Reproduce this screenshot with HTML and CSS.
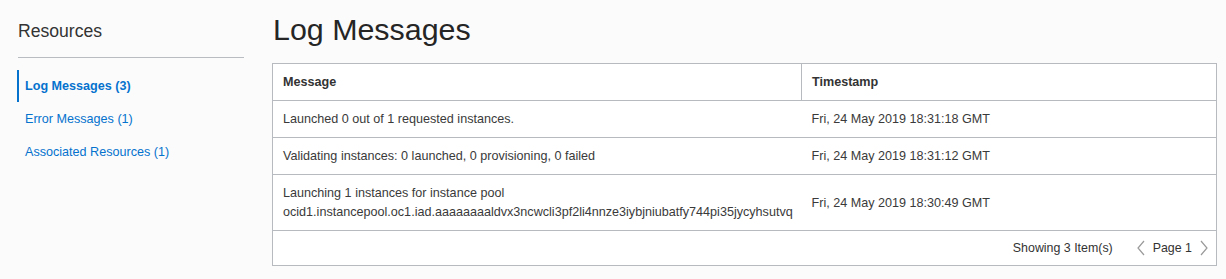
FILE: index.html
```html
<!DOCTYPE html>
<html lang="en">
<head>
<meta charset="utf-8">
<title>Log Messages</title>
<link rel="stylesheet" href="styles.css">
</head>
<body>
<div class="page">
  <aside class="sidebar">
    <h2 class="side-title">Resources</h2>
    <ul class="side-nav">
      <li class="side-item active"><a href="#">Log Messages (3)</a></li>
      <li class="side-item"><a href="#">Error Messages (1)</a></li>
      <li class="side-item"><a href="#">Associated Resources (1)</a></li>
    </ul>
  </aside>
  <main class="main">
    <h1 class="main-title">Log Messages</h1>
    <div class="panel">
      <table class="grid">
        <thead>
          <tr>
            <th class="col-msg">Message</th>
            <th class="col-ts">Timestamp</th>
          </tr>
        </thead>
        <tbody>
          <tr>
            <td>Launched 0 out of 1 requested instances.</td>
            <td>Fri, 24 May 2019 18:31:18 GMT</td>
          </tr>
          <tr>
            <td>Validating instances: 0 launched, 0 provisioning, 0 failed</td>
            <td>Fri, 24 May 2019 18:31:12 GMT</td>
          </tr>
          <tr>
            <td>Launching 1 instances for instance pool<br>ocid1.instancepool.oc1.iad.aaaaaaaaldvx3ncwcli3pf2li4nnze3iybjniubatfy744pi35jycyhsutvq</td>
            <td>Fri, 24 May 2019 18:30:49 GMT</td>
          </tr>
        </tbody>
      </table>
      <div class="pager">
        <span class="pager-count">Showing 3 Item(s)</span>
        <span class="pager-nav">
          <svg class="chev" width="8" height="16" viewBox="0 0 8 16"><polyline points="7,1 1,8 7,15" fill="none" stroke="#9a9a9a" stroke-width="1.2"/></svg>
          <span class="pager-page">Page 1</span>
          <svg class="chev" width="8" height="16" viewBox="0 0 8 16"><polyline points="1,1 7,8 1,15" fill="none" stroke="#9a9a9a" stroke-width="1.2"/></svg>
        </span>
      </div>
    </div>
  </main>
</div>
</body>
</html>
```

FILE: styles.css
```css
html, body {
  margin: 0;
  padding: 0;
  background: #fbfbfb;
  font-family: "Liberation Sans", Arial, sans-serif;
  color: #333333;
}

.page {
  display: flex;
  gap: 28px;
  padding: 0 9px 0 17px;
}

.sidebar {
  width: 227px;
  flex: none;
}

.side-title {
  margin: 19px 0 0 1px;
  font-size: 17.6px;
  line-height: 24px;
  font-weight: normal;
  color: #333333;
  padding-bottom: 14px;
  border-bottom: 1px solid #b9bcc0;
}

.side-nav {
  list-style: none;
  margin: 12px 0 0;
  padding: 0;
}

.side-item {
  height: 32px;
  margin-bottom: 1px;
  display: flex;
  align-items: center;
  padding-left: 8px;
  border-left: 2px solid transparent;
  font-size: 12.6px;
}

.side-item.active {
  border-left-color: #0572ce;
}

.side-item a {
  color: #0572ce;
  text-decoration: none;
  margin-left: -2px;
}

.side-item.active a {
  font-weight: bold;
}

.main {
  flex: 1;
  min-width: 0;
}

.main-title {
  margin: 12px 0 17px 1px;
  font-size: 30.4px;
  line-height: 34px;
  font-weight: normal;
  color: #252525;
}

.panel {
  background: #ffffff;
  border: 1px solid #b7babe;
}

.grid {
  width: 100%;
  border-collapse: collapse;
  table-layout: fixed;
  font-size: 12.6px;
}

.grid th,
.grid td {
  text-align: left;
  vertical-align: middle;
  padding: 9px 10px 8px;
  line-height: 19px;
  color: #333333;
}

.grid td {
  color: #3a3a3a;
}

.grid th {
  font-weight: bold;
  border-bottom: 1px solid #b7babe;
}

.grid td {
  border-bottom: 1px solid #b7babe;
}

.col-msg {
  width: 508px;
  border-right: 1px solid #b7babe;
}

.pager {
  display: flex;
  justify-content: flex-end;
  align-items: center;
  height: 34px;
  padding-right: 8px;
  font-size: 12.4px;
  color: #333333;
}

.pager-nav {
  display: flex;
  align-items: center;
  margin-left: 24px;
  gap: 8px;
}

.chev {
  display: block;
}
```
